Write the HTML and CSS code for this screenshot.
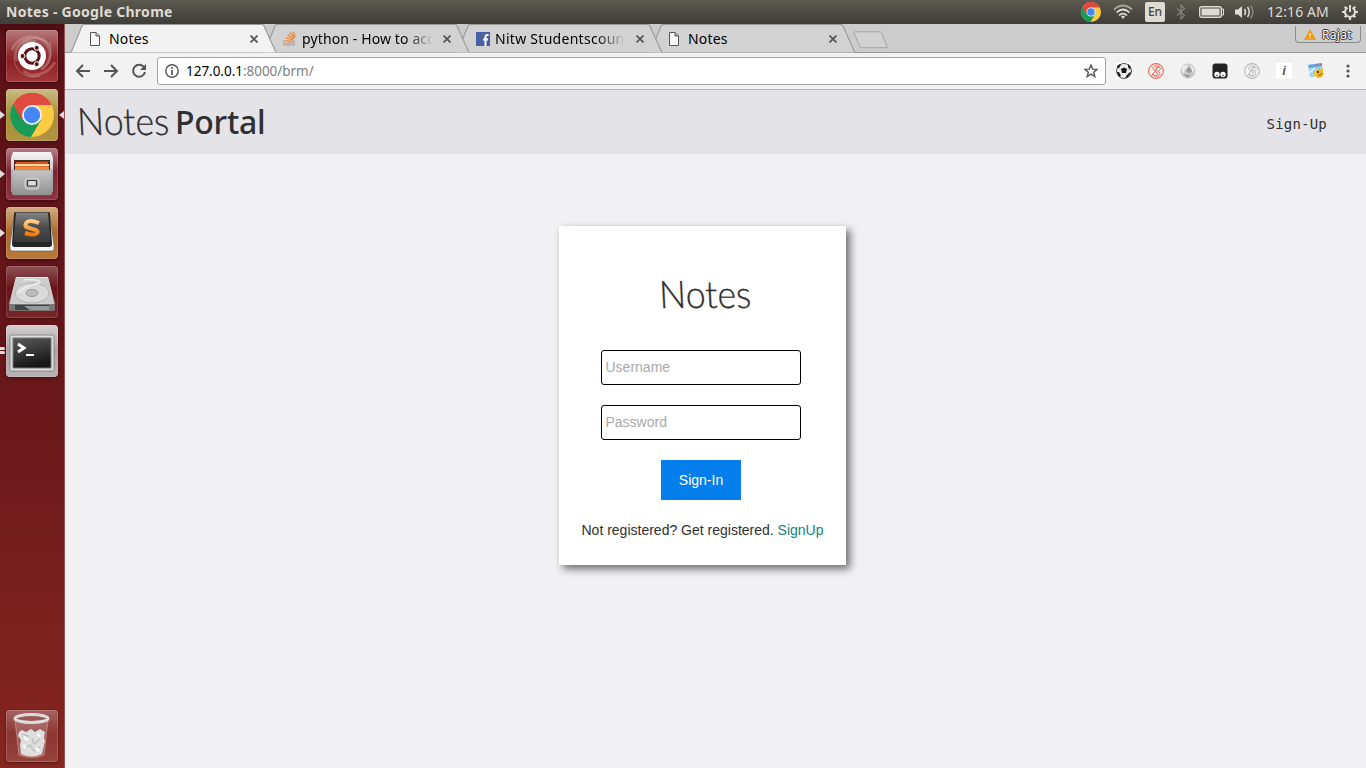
FILE: index.html
```html
<!DOCTYPE html>
<html lang="en">
<head>
<meta charset="utf-8">
<title>Notes</title>
<link rel="stylesheet" href="styles.css">
</head>
<body>
<svg class="defs" width="0" height="0">
  <defs>
    <linearGradient id="metal" x2="0" y2="1"><stop stop-color="#f5f5f5"/><stop offset="1" stop-color="#9c9c9c"/></linearGradient>
    <linearGradient id="front" x2="0" y2="1"><stop stop-color="#c4c4c4"/><stop offset="1" stop-color="#929292"/></linearGradient>
    <linearGradient id="darkg" x2="0" y2="1"><stop stop-color="#858585"/><stop offset=".5" stop-color="#4c4c4c"/><stop offset="1" stop-color="#3a3a3a"/></linearGradient>
    <linearGradient id="screen" x2=".3" y2="1"><stop stop-color="#5a5a5a"/><stop offset=".6" stop-color="#333"/><stop offset="1" stop-color="#151515"/></linearGradient>
    <linearGradient id="orange" x2="0" y2="1"><stop stop-color="#ffd08a"/><stop offset="1" stop-color="#f57900"/></linearGradient>
    <symbol id="chrome" viewBox="0 0 44 44">
      <circle cx="22" cy="22" r="22" fill="#fdca43"/>
      <path d="M22 22L3 11A22 22 0 0 0 21 44L31 27Z" fill="#189b56"/>
      <path d="M3 11A22 22 0 0 1 42 12H22L12 27Z" fill="#e04b40"/>
      <circle cx="22" cy="22" r="10" fill="#f3f3f3"/><circle cx="22" cy="22" r="8.2" fill="#4486f4"/>
    </symbol>
    <symbol id="page" viewBox="0 0 10 14"><path d="M.5.5H6L9.500 4V13.500H.5ZM6 .5V4H9.500" fill="#f8f8f8" stroke="#555"/></symbol>
    <symbol id="cross" viewBox="0 0 8 8"><path d="M.5.5L7.500 7.500M7.500.5L.5 7.500" stroke="#555" stroke-width="1.700"/></symbol>
    <symbol id="tabshape" viewBox="0 0 205 29"><path d="M0 28.500L11 2Q12 .5 13 .5H191Q192 .5 193 2L205 28.500" fill="currentColor" stroke="#999" stroke-width="1.100"/></symbol>
    <symbol id="sring" viewBox="0 0 16 16"><circle cx="8" cy="8" r="7.400" fill="none" stroke="currentColor" stroke-width="1.100"/><path d="M11.800 4.500C9.500 1.800 4.500 2.500 4.800 5.500C5 8.500 9.500 8.500 9.700 11C9.700 12.800 6.500 13 4 11M11.800 4.500C10 4 7.500 3.800 7.300 5.500C7.300 7.500 11.800 8 12 10.800C12 13.500 7 14.500 4 11M11 3L3.500 13M13.500 4.500L11 8" fill="none" stroke="currentColor"/></symbol>
  </defs>
</svg>

<div class="desktop">
  <header class="panel">
    <span class="panel-title">Notes - Google Chrome</span>
    <div class="tray">
      <svg class="i-chrome" width="20" height="20"><use href="#chrome"/></svg>
      <svg class="i-wifi" width="20" height="16" viewBox="0 0 20 16" fill="none" stroke="#dfdbd2" stroke-width="1.700"><path d="M1 5.500Q10-2.500 19 5.500" stroke="#a9a69e"/><path d="M3.500 8.500Q10 2.500 16.500 8.500M6 11.500Q10 7.500 14 11.500"/><path d="M8 12.500Q10 11 12 12.500L10 15Z" fill="#dfdbd2" stroke="none"/></svg>
      <span class="lang">En</span>
      <svg class="i-bt" width="10" height="16" viewBox="0 0 10 16"><path d="M1 4.500L8.500 11.500L5 15V1L8.500 4.500L1 11.500" fill="none" stroke="#86847c" stroke-width="1.200"/></svg>
      <svg class="i-bat" width="25" height="12" viewBox="0 0 25 12"><rect x=".7" y=".7" width="21.600" height="10.600" rx="2" fill="none" stroke="#dfdbd2" stroke-width="1.400"/><path d="M2.500 2.500H20.500V9.500H2.500Z" fill="#dfdbd2"/><path d="M23 3H24.500V9H23" fill="none" stroke="#dfdbd2"/></svg>
      <svg class="i-vol" width="20" height="16" viewBox="0 0 20 16" fill="none" stroke="#dfdbd2" stroke-width="1.500"><path d="M0 5.500H3L7 2V14L3 10.500H0Z" fill="#dfdbd2" stroke="none"/><path d="M9.500 5Q11.500 8 9.500 11M12.500 3Q16 8 12.500 13"/><path d="M15.500 1.500Q20.500 8 15.500 14.500" stroke="#88867e"/></svg>
      <span class="clock">12:16 AM</span>
      <svg class="i-gear" width="16" height="16" viewBox="0 0 16 16" fill="none" stroke="#dfdbd2"><path d="M5.500 3.600A5 5 0 1 0 10.500 3.600M8 1V8" stroke-width="2"/><path d="M2.700 2.700L4.500 4.500M13.300 2.700L11.500 4.500M0 8H3M13 8H16M2.700 13.300L4.500 11.500M13.300 13.300L11.500 11.500M8 13V16" stroke-width="2.200"/></svg>
    </div>
  </header>

  <div class="workspace">
    <nav class="launcher">
      <div class="tile ubuntu"><svg width="52" height="52" viewBox="0 0 52 52">
        <g fill="none" stroke="#fff"><path d="M6 20C12 3 39 3 43 18C46 27 42 35 35 39M18 41C26 50 43 43 49 32M11 31C6 20 15 7 29 12" stroke-opacity=".2" stroke-width="3"/><path d="M8 27C9 44 22 49 34 46M44 12C47 26 43 36 35 40M16 14C23 5 38 7 43 15" stroke-opacity=".25"/></g>
        <circle cx="26" cy="26" r="14" fill="#fff"/><circle cx="26" cy="26" r="7.200" fill="none" stroke="#5b1216" stroke-width="3"/>
        <g fill="#5b1216" stroke="#fff"><circle cx="16.500" cy="26" r="2.500"/><circle cx="30.700" cy="17.800" r="2.500"/><circle cx="30.700" cy="34.200" r="2.500"/></g></svg></div>
      <div class="tile google"><i class="run"></i><i class="focus"></i><svg width="44" height="44"><use href="#chrome"/></svg></div>
      <div class="tile files"><i class="run"></i><svg width="52" height="52" viewBox="0 0 52 52">
        <path d="M7 4H45L47 10V44H5V10Z" fill="url(#metal)"/><path d="M8 12H44V23H8Z" fill="#4b2a22"/><path d="M10 14H30L32 13.500H42V22H9Z" fill="#d9541e"/><path d="M9 16H43V18H9Z" fill="#ffd9a8"/><path d="M9 18.500H43V22H9Z" fill="#f08a38"/>
        <path d="M6 22H46V45Q46 47 43 47H9Q6 47 6 45Z" fill="url(#front)" stroke="#888" stroke-width=".5"/><rect x="19" y="30" width="14" height="11" rx="2.500" fill="#b4b4b4" stroke="#d4d4d4"/><rect x="21.500" y="32.500" width="9" height="5.500" rx="1" fill="#ddd" stroke="#333" stroke-width="1.200"/></svg></div>
      <div class="tile sublime"><i class="run"></i><svg width="52" height="52" viewBox="0 0 52 52">
        <path d="M8 10H44L48 38V42Q48 44 45 44H7Q4 44 4 42V38Z" fill="#f4f4f4" stroke="#666" stroke-width=".7"/><path d="M10 5H42Q44 5 44 7L46 37Q46 40 43 40H9Q6 40 6 37L8 7Q8 5 10 5Z" fill="#242424"/><path d="M10 5.500H42L44.500 33Q44.500 35 42 35H10Q7.500 35 7.500 33Z" fill="url(#darkg)"/>
        <path d="M33 14.500Q21 10 19.500 16C18.500 21.500 33 19.500 31.500 24Q29 28 19 24.500" transform="translate(0 1.500)" fill="none" stroke="url(#orange)" stroke-width="4"/></svg></div>
      <div class="tile drive"><svg width="52" height="52" viewBox="0 0 52 52">
        <path d="M10 12H42L49 38V44Q49 45 47 45H5Q3 45 3 44V38Z" fill="#777"/><path d="M10 11H42L49 38H3Z" fill="url(#metal)"/><path d="M10 12H42L48 38H4Z" fill="#ccc"/><ellipse cx="26" cy="27" rx="17" ry="10" fill="#d9d9d9" stroke="#b4b4b4"/><ellipse cx="26" cy="27" rx="6" ry="3.500" fill="#bbb" stroke="#999"/><path d="M17 14C25 13 37 14 33 17C28 19 17 20 12 27" fill="none" stroke="#eee" stroke-width="1.500"/><path d="M9 39H43V44H9Z" fill="#444"/><path d="M18 40H43V44H24Z" fill="#999"/></svg></div>
      <div class="tile terminal"><i class="run"></i><i class="run second"></i><svg width="52" height="52" viewBox="0 0 52 52">
        <rect x="4" y="10" width="44" height="36" rx="1.500" fill="#ddd" stroke="#888"/><rect x="7" y="13" width="38" height="30" fill="url(#screen)" stroke="#777"/><path d="M12 19L18 23L12 27" fill="none" stroke="#fff" stroke-width="3"/><path d="M20 30H28" stroke="#fff" stroke-width="2"/></svg></div>
      <div class="tile trash"><svg width="52" height="52" viewBox="0 0 52 52">
        <path d="M9 10H42L38 45Q26 50 13 45Z" fill="#fff" fill-opacity=".18" stroke="#c99a9a" stroke-width=".7"/>
        <path d="M13 22L16 20L20 22L25 19L29 22L34 19L39 22L38 28L39 31L36 44Q26 49 15 44L14 35L15 30L12 26Z" fill="#dedede"/><path d="M16 24L22 26L19 30M26 28L28 34L34 29M18 38L24 35L28 41L34 37" fill="none" stroke="#c0c0c0" stroke-width="1.500"/><path d="M18 27L22 30M31 24L34 26M30 38L33 41M17 35L20 38" stroke="#f6f6f6" stroke-width="3"/>
        <ellipse cx="25.500" cy="8.500" rx="16.500" ry="4" fill="#9b5757" stroke="#dcdcdc" stroke-width="3"/></svg></div>
    </nav>

    <div class="browser">
      <div class="tabstrip">
        <div class="tab active"><svg class="shape" width="205" height="29"><use href="#tabshape"/></svg><svg class="fav" width="10" height="14"><use href="#page"/></svg><span class="label">Notes</span><svg class="close" width="8" height="8"><use href="#cross"/></svg></div>
        <div class="tab t2"><svg class="shape" width="205" height="29"><use href="#tabshape"/></svg><svg class="fav" width="13" height="15" viewBox="0 0 13 15"><path d="M1 9V14H11V9" fill="none" stroke="#a5a5a5" stroke-width="1.200"/><path d="M2.500 12H9.500M2.500 9.500L9.600 10.500M3 6.800L10 9M4.600 4L10.700 8M7 1.500L11.500 7M10 .5L12.300 6" stroke="#f48024" stroke-width="1.200"/></svg><span class="label py">python - How to acc</span><svg class="close" width="8" height="8"><use href="#cross"/></svg></div>
        <div class="tab t3"><svg class="shape" width="205" height="29"><use href="#tabshape"/></svg><svg class="fav" width="14" height="14" viewBox="0 0 14 14"><path d="M0 0H14V14H0Z" fill="#4862a3"/><path d="M12.500 3H11Q9.500 3 9.500 5V14M7 7.500H12" fill="none" stroke="#fff" stroke-width="2"/></svg><span class="label nitw">Nitw Studentscoun</span><svg class="close" width="8" height="8"><use href="#cross"/></svg></div>
        <div class="tab t4"><svg class="shape" width="205" height="29"><use href="#tabshape"/></svg><svg class="fav" width="10" height="14"><use href="#page"/></svg><span class="label">Notes</span><svg class="close" width="8" height="8"><use href="#cross"/></svg></div>
        <svg class="newtab" width="35" height="18" viewBox="0 0 35 18"><path d="M2 .8H26Q28 .8 28.500 2L34 15Q34.500 16.700 33 16.700H9Q7.500 16.700 7 15.500L1 2Q.8.8 2 .8Z" fill="#d2d2d2" stroke="#a5a5a5"/></svg>
        <div class="profile"><svg width="12" height="11" viewBox="0 0 12 11"><path d="M6 0L12 11H0Z" fill="#f39a10"/><path d="M6 4V7.500M6 8.500V9.700" stroke="#fff"/></svg><span>Rajat</span></div>
      </div>

      <div class="toolbar">
        <svg class="nav-icon" width="16" height="16" viewBox="0 0 16 16"><path d="M15 8H2M8 2L2 8L8 14" fill="none" stroke="#555" stroke-width="2"/></svg>
        <svg class="nav-icon" width="16" height="16" viewBox="0 0 16 16"><path d="M1 8H14M8 2L14 8L8 14" fill="none" stroke="#555" stroke-width="2"/></svg>
        <svg class="nav-icon" width="16" height="16" viewBox="0 0 16 16"><path d="M13 4.200A6 6 0 1 0 14 9" fill="none" stroke="#555" stroke-width="2"/><path d="M15 1V7H9Z" fill="#555"/></svg>
        <div class="omnibox">
          <svg width="14" height="14" viewBox="0 0 14 14"><circle cx="7" cy="7" r="6.200" fill="none" stroke="#555" stroke-width="1.400"/><path d="M7 3V4.800M7 6V11" stroke="#555" stroke-width="1.700"/></svg>
          <span class="url"><b>127.0.0.1</b>:8000/brm/</span>
          <svg class="star" width="14" height="14" viewBox="0 0 14 14"><path d="M7 1L8.700 5.100L13 5.400L9.700 8.300L10.800 12.600L7 10.200L3.200 12.600L4.300 8.300L1 5.400L5.300 5.100Z" fill="none" stroke="#555" stroke-width="1.400"/></svg>
        </div>
        <div class="extensions">
          <svg width="16" height="16" viewBox="0 0 16 16"><path d="M0 0H16V16H0Z" fill="#fff"/><circle cx="8" cy="8" r="7.500" fill="#eee" stroke="#555"/><path d="M5 6L8 4.500L11 6L10 10H6ZM1 3L4 1L5 2L3 5L1 5ZM12 1L15 4L14 7L12 4ZM1 9L3 9L5 13L3 14ZM14 9L15 10L12 14L9 15L11 12Z" fill="#171717"/><path d="M5 6L2 5M11 6L14 5M6 10L4 12M10 10L12 12" stroke="#aaa" stroke-width=".6"/></svg>
          <svg class="red" width="16" height="16"><use href="#sring"/></svg>
          <svg width="16" height="16" viewBox="0 0 16 16"><circle cx="8" cy="8" r="7.500" fill="#c9c9c9"/><path d="M2 4L7 1L8 4L5 7L4 10L2 9ZM10 2L14 5L14 10L11 8Z" fill="#e9e9e9"/><path d="M8 4L11 5L12 9L9 10L6 8ZM3 11L8 12L11 11L8 15Z" fill="#999"/></svg>
          <svg width="16" height="16" viewBox="0 0 16 16"><rect x=".5" y=".5" width="15" height="15" rx="3" fill="#222"/><circle cx="5" cy="11.500" r="2.700" fill="#fff"/><circle cx="11" cy="11.500" r="2.700" fill="#fff"/><circle cx="5" cy="12.500" r="1" fill="#777"/><circle cx="11" cy="12.500" r="1" fill="#777"/></svg>
          <svg class="grey" width="16" height="16"><use href="#sring"/></svg>
          <span class="info">i</span>
          <svg width="16" height="16" viewBox="0 0 16 16"><path d="M0 2L14 0L15 13L2 14Z" fill="#9ad0f4"/><path d="M0 2L14 0V3L1 5Z" fill="#54a8e4"/><path d="M8 2H10M12 2H14" stroke="#e55" stroke-width="1.500"/><path d="M1 10L7 5" stroke="#d5eefd" stroke-width="2"/><circle cx="11" cy="10.500" r="4.500" fill="#edb922"/><path d="M5 11L8 8L9 14ZM12 6L15 5L15 9" fill="#f5c838"/><circle cx="10" cy="9" r="1" fill="#222"/><path d="M10 12Q13 13 14 10" fill="none" stroke="#946500"/></svg>
          <svg class="menu" width="4" height="14" viewBox="0 0 4 14" fill="#555"><circle cx="2" cy="2" r="1.600"/><circle cx="2" cy="7" r="1.600"/><circle cx="2" cy="12" r="1.600"/></svg>
        </div>
      </div>

      <main class="page">
        <header class="site-header">
          <div class="brand"><span class="hand">Notes</span><span class="portal">Portal</span></div>
          <a class="signup">Sign-Up</a>
        </header>
        <form class="card">
          <h1 class="hand">Notes</h1>
          <input class="field" type="text" placeholder="Username">
          <input class="field" type="password" placeholder="Password">
          <button class="submit" type="button">Sign-In</button>
          <p class="register">Not registered? Get registered. <a>SignUp</a></p>
        </form>
      </main>
    </div>
  </div>
</div>
</body>
</html>
```
FILE: styles.css
```css
* { box-sizing: border-box; }
body { margin: 0; width: 1366px; height: 768px; overflow: hidden; font-family: "Noto Sans", sans-serif; }
svg { display: block; flex: none; }
.defs { position: absolute; }
.desktop { display: flex; flex-direction: column; height: 768px; }

.panel { height: 24px; flex: none; display: flex; justify-content: space-between; align-items: center; padding: 0 8px 0 6px; background: linear-gradient(#5f5d50, #57554c 12%, #3e3d38); color: #dfdbd2; }
.panel-title { font-size: 14px; font-weight: 700; line-height: 24px; letter-spacing: .28px; }
.tray { display: flex; align-items: center; height: 24px; }
.i-wifi { margin-left: 12px; }
.lang { margin-left: 12px; width: 20px; height: 20px; border-radius: 2px; background: #dfdbd2; color: #45443e; font-size: 12px; font-weight: 500; line-height: 20px; text-align: center; }
.i-bt { margin-left: 11px; }
.i-bat { margin-left: 13px; }
.i-vol { margin-left: 11px; }
.clock { margin-left: 12px; width: 62px; font-size: 14px; letter-spacing: .1px; line-height: 24px; margin-top: -1px; white-space: nowrap; }
.i-gear { margin-left: 13px; }

.workspace { display: flex; flex: 1; min-height: 0; }
.launcher { width: 65px; flex: none; padding: 6px 0 6px 6px; display: flex; flex-direction: column; gap: 7px; background: linear-gradient(#4b0d12, #5b1117 2%, #64151a 40%, #85261f); border-right: 1px solid #8d5554; }
.tile { position: relative; width: 52px; height: 52px; flex: none; display: flex; align-items: center; justify-content: center; border-radius: 4px; box-shadow: inset 0 0 0 1px rgba(255,255,255,.15), 0 1px 3px rgba(0,0,0,.4); }
.ubuntu { background: linear-gradient(#b77a7c, #942f32 45%, #8b1f22 60%, #a3383a); }
.google { background: linear-gradient(#c9bb83, #a98e37 50%, #b09440); }
.files { background: linear-gradient(#b77d84, #7c2634 45%, #8b3341); }
.sublime { background: linear-gradient(#d2ae83, #ab6925 50%, #b8793a); }
.drive { background: linear-gradient(#8f5053, #681317 45%, #78282a); }
.terminal { background: linear-gradient(#d5cfd0, #aaa1a4 50%, #b9b1b3); }
.trash { margin-top: auto; background: linear-gradient(#a76360, #8c3531 45%, #97423d); }
.run { position: absolute; left: -6px; top: 22px; border: 4px solid transparent; border-left: 5px solid #ddd; border-right: 0; }
.focus { position: absolute; right: -6px; top: 22px; border: 4px solid transparent; border-right: 5px solid #ddd; border-left: 0; }
.terminal .run { top: 22px; width: 5px; height: 3px; border: 0; background: #ddd; border-radius: 0 2px 2px 0; }
.terminal .second { top: 26px; }

.browser { flex: 1; min-width: 0; display: flex; flex-direction: column; }
.tabstrip { height: 29px; flex: none; display: flex; padding-left: 6px; background: linear-gradient(#999, #999) bottom / 100% 1px no-repeat #ccc; }
.tab { position: relative; display: flex; align-items: center; width: 205px; height: 29px; margin-right: -12px; padding: 0 18px 0 19px; color: #d2d2d2; z-index: 1; }
.tab.active { z-index: 4; color: #f2f2f2; }
.t2 { z-index: 3; }
.t3 { z-index: 2; }
.shape { position: absolute; left: 0; top: 0; z-index: -1; }
.tab .label { margin-left: 9px; color: #000; font-size: 14px; letter-spacing: .2px; line-height: 28px; white-space: nowrap; margin-right: auto; }
.tab .py { margin-left: 6px; letter-spacing: .12px; }
.tab .nitw { margin-left: 5px; letter-spacing: .28px; }
.py, .nitw { -webkit-mask-image: linear-gradient(90deg, #000 78%, transparent); mask-image: linear-gradient(90deg, #000 78%, transparent); }
.close { margin-top: 1px; }
.newtab { margin: 7px 0 0 10px; }
.profile { margin: 2px 5px 0 auto; height: 17px; width: 66px; display: flex; align-items: center; gap: 6px; padding-left: 8px; border: 1px solid #8e8e8e; border-top: 0; border-radius: 0 0 4px 4px; font-size: 12px; color: #fff; }
.profile span { text-shadow: 1px 0 #333, -1px 0 #333, 0 1px #333, 0 -1px #333; letter-spacing: .3px; }

.toolbar { height: 37px; flex: none; display: flex; align-items: center; padding: 0 15px 0 10px; background: #f2f2f2; border-bottom: 1px solid #b6b4b6; }
.nav-icon { margin-right: 12px; }
.omnibox { width: 949px; height: 28px; margin-left: -2px; border: 1px solid #a6a6a6; border-radius: 3px; background: #fff; display: flex; align-items: center; padding: 0 7px; }
.url { margin-left: 7px; font-size: 13.500px; color: #808080; letter-spacing: -.03px; }
.url b { color: #000; font-weight: 400; }
.star { margin-left: auto; }
.extensions { display: flex; align-items: center; gap: 16px; margin-left: 10px; }
.red { color: #f06858; }
.grey { color: #bbb; }
.info { width: 16px; height: 16px; background: #fff; color: #555; font: italic 700 13px/16px "Liberation Sans", sans-serif; text-align: center; }
.menu { margin-left: 6px; }

.page { flex: 1; background: #f1f0f3; display: flex; flex-direction: column; align-items: center; font-family: "Liberation Sans", Arial, sans-serif; color: #303030; }
.site-header { align-self: stretch; height: 64px; display: flex; align-items: center; justify-content: space-between; padding: 0 39px 0 12px; background: #e4e3e8; }
.brand { display: flex; align-items: center; height: 64px; }
.hand { font-family: Lato, sans-serif; font-weight: 300; font-size: 38px; line-height: 48px; color: #303030; -webkit-text-stroke: .3px #303030; transform: scaleX(.94) skewX(3deg); transform-origin: left center; }
.brand .hand { margin: -4px -4px 0 0; }
.portal { margin-left: 4px; font: 500 32px/64px "Noto Sans", sans-serif; letter-spacing: -.2px; }
.signup { margin-top: 3px; font: 14px "DejaVu Sans Mono", monospace; letter-spacing: .2px; }
.card { width: 287px; height: 339px; margin: 72px 0 0 -26px; display: flex; flex-direction: column; align-items: center; padding-top: 43px; background: #fff; box-shadow: 4px 4px 8px rgba(0,0,0,.55); font-size: 14px; }
.card { margin-left: -26px; }
.card h1 { margin: 0 0 33px 11px; }
.field { width: 200px; height: 35px; margin: 0 3px 20px 0; padding: 0 4px 2px 3.500px; border: 1px solid #000; border-radius: 3px; background: #fff; font: 14px "Liberation Sans", Arial, sans-serif; }
.field::placeholder { color: #a9a9a9; }
.submit { width: 80px; height: 40px; margin: 0 3px 0 0; border: 0; padding: 0; background: #047eea; color: #fff; font: 14px "Liberation Sans", Arial, sans-serif; }
.register { margin: 22px 0 0; line-height: 16px; white-space: nowrap; }
.register a { color: #148382; }
```
